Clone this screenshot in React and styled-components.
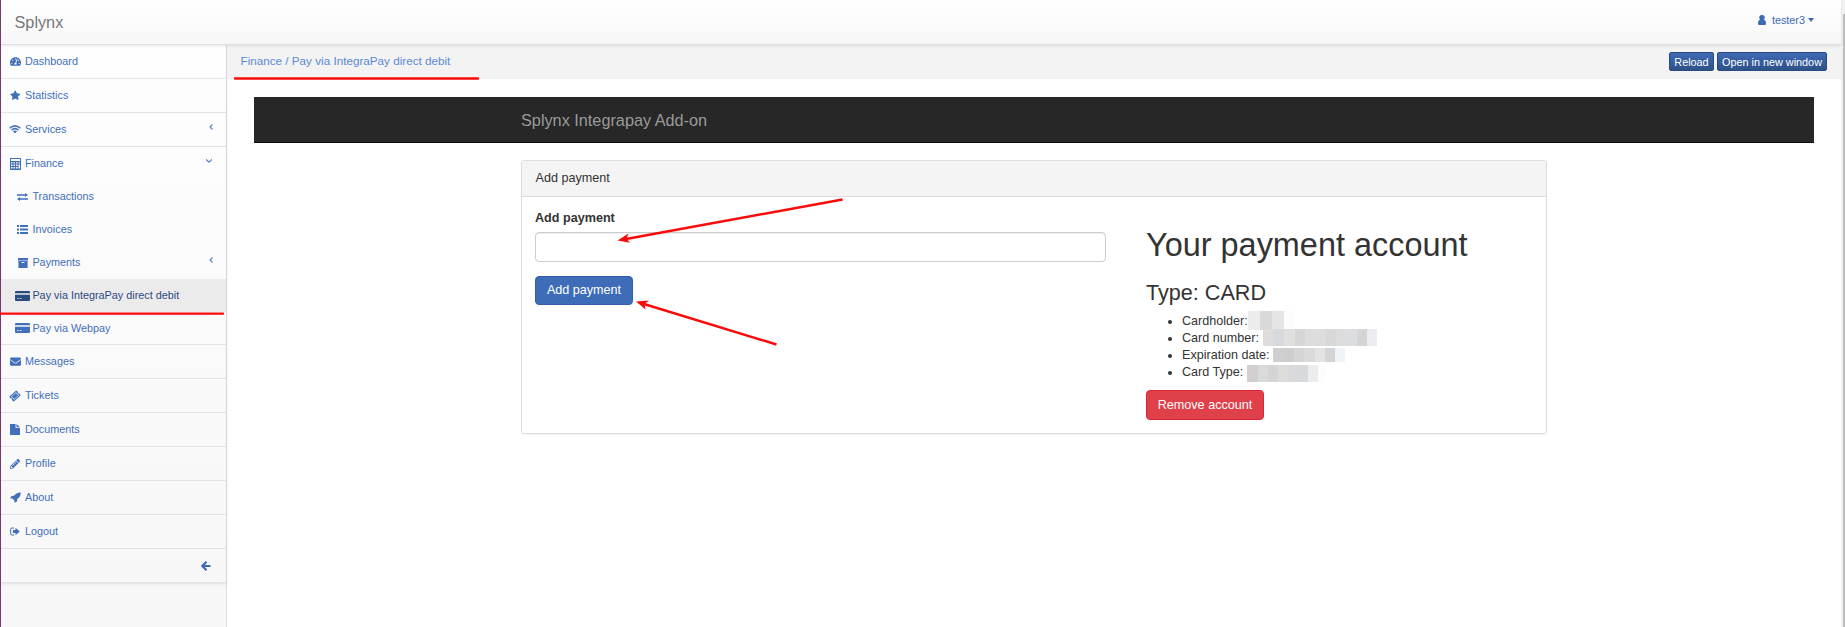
import React from "react";
import styled, { createGlobalStyle, css } from "styled-components";
import { FaTachometerAlt, FaStar, FaEnvelope, FaTicketAlt, FaPencilAlt } from "react-icons/fa";

const GlobalStyle = createGlobalStyle`
  * { box-sizing: border-box; }
  html, body { margin: 0; padding: 0; overflow: hidden; background: #fff; }
  body { font-family: "Liberation Sans", Arial, sans-serif; font-size: 12.6px; line-height: 17px; color: #333; }
`;

const Page = styled.div`
  position: relative;
  display: grid;
  grid-template-columns: 1px 1fr 4px;
  width: 1845px;
  height: 627px;
  overflow: hidden;
`;
const Edge = styled.div`background: #7b3a70;`;
const Frame = styled.div`display: flex; flex-direction: column; min-width: 0;`;
const ScrollTrack = styled.div`background: #f1f1f1; padding: 14px 0 0 2px;`;
const ScrollThumb = styled.div`height: 613px; background: #bcbcbc;`;

const Header = styled.header`
  display: flex;
  justify-content: space-between;
  flex: none;
  height: 45px;
  padding: 0 27px 0 13.5px;
  border-bottom: 1px solid #dfdfdf;
  background: linear-gradient(#fff, #f7f7f7);
  box-shadow: 0 1px 3px rgba(0, 0, 0, 0.09);
  z-index: 1;
`;
const Logo = styled.div`font-size: 16.25px; line-height: 45px; color: #777;`;
const UserMenu = styled.div`
  display: flex;
  align-items: center;
  height: 40px;
  font-size: 10.83px;
  color: #3e6ab5;
  svg { margin-right: 6px; }
`;
const Caret = styled.span`
  margin-left: 3px;
  border: 3.5px solid transparent;
  border-width: 4px 3px 0;
  border-top-color: #3e6ab5;
`;

const Body = styled.div`display: flex; flex: 1; min-height: 0;`;
const Sidebar = styled.nav`
  width: 226px;
  background: #f7f7f7;
  border-right: 1px solid #ddd;
`;
const Menu = styled.div`
  background: linear-gradient(#fefefe, #f7f7f7);
  box-shadow: 0 1px 3px rgba(0, 0, 0, 0.1);
`;
const MenuItem = styled.a`
  display: flex;
  align-items: center;
  height: ${(p) => (p.$open ? 33 : 34)}px;
  padding: 0 13px 0 8px;
  font-size: 10.83px;
  color: #426fba;
  border-bottom: ${(p) => (p.$open ? "0" : "1px solid #e3e3e3")};
  ${(p) => p.$sub && css`
    height: 33px;
    padding-left: 14px;
    border-bottom: ${p.$last ? "1px solid #e3e3e3" : "0"};
  `}
  ${(p) => p.$active && css`background: #ebebeb; color: #2b4a80;`}
`;
const IconSlot = styled.span`
  display: flex;
  justify-content: center;
  width: ${(p) => (p.$sub ? 15 : 12)}px;
  margin-right: ${(p) => (p.$sub ? 2.4 : 4)}px;
`;
const TiltedTicket = styled(FaTicketAlt)`transform: rotate(-42deg);`;
const Label = styled.span`flex: 1; white-space: nowrap;`;
const Chevron = styled.svg`margin: -5px ${(p) => (p.$nudge ? -1 : 0)}px 0 0; flex: none;`;
const CollapseRow = styled.div`
  display: flex;
  align-items: center;
  justify-content: flex-end;
  height: 34px;
  padding-right: 15px;
  border-bottom: 1px solid #e3e3e3;
`;

const Main = styled.main`flex: 1; min-width: 0;`;
const Crumbs = styled.div`
  display: flex;
  align-items: center;
  justify-content: space-between;
  height: 34px;
  padding: 0 14px 2px 13.5px;
  background: #f3f3f3;
  font-size: 11.7px;
  color: #5a8ad4;
`;
const Trail = styled.span`padding-bottom: 2px;`;
const SmallActions = styled.div`display: flex; gap: 3px;`;
const SmallButton = styled.button`
  width: ${(p) => p.$width}px;
  height: 19px;
  padding: 1px 0 0;
  border: 1px solid #284a80;
  border-radius: 2px;
  background: linear-gradient(#3e6ab5, #2f5188);
  color: #fff;
  font: 10.83px/17px "Liberation Sans", Arial, sans-serif;
  white-space: nowrap;
`;

const Content = styled.div`padding: 18px 27px;`;
const Navbar = styled.div`
  height: 46px;
  padding-left: 267px;
  background: #272727;
  border-bottom: 1px solid #0c0c0c;
  color: #9a9a9a;
  font-size: 16.25px;
  line-height: 47px;
`;
const Panel = styled.section`
  width: 1026px;
  height: 274px;
  margin: 17px 0 0 267px;
  border: 1px solid #ddd;
  border-radius: 3px;
  box-shadow: 0 1px 1px rgba(0, 0, 0, 0.05);
`;
const PanelHeading = styled.div`
  height: 36px;
  padding-left: 13.5px;
  line-height: 34px;
  background: #f4f4f4;
  border-bottom: 1px solid #ddd;
`;
const PanelBody = styled.div`display: flex; padding: 0 13px;`;
const FormColumn = styled.form`width: 571px; padding-top: 13px; flex: none;`;
const FieldLabel = styled.label`display: block; height: 22px; font-weight: bold; line-height: 17px;`;
const Input = styled.input`
  display: block;
  width: 100%;
  height: 30px;
  margin-bottom: 14px;
  border: 1px solid #ccc;
  border-radius: 4px;
  box-shadow: inset 0 1px 1px rgba(0, 0, 0, 0.075);
`;
const Button = styled.button`
  display: block;
  width: ${(p) => p.$width}px;
  height: ${(p) => (p.$danger ? 30 : 29)}px;
  margin-top: ${(p) => (p.$danger ? 9 : 0)}px;
  padding: ${(p) => (p.$danger ? "1px 0 0" : "0 0 1px")};
  border: 1px solid ${(p) => (p.$danger ? "#d9243a" : "#375fa3")};
  border-radius: 4px;
  background: ${(p) => (p.$danger ? "#df4049" : "#3f6cb8")};
  color: #fff;
  font: 12.6px/17px "Liberation Sans", Arial, sans-serif;
  white-space: nowrap;
`;
const Account = styled.div`margin-left: 40px;`;
const Title = styled.h1`margin: 30px 0 0; font-size: 32.45px; font-weight: 400; line-height: 36px;`;
const Subtitle = styled.h3`margin: 18px 0 0; font-size: 21.6px; font-weight: 400; line-height: 24px;`;
const Details = styled.ul`margin: 8px 0 0; padding: 0 0 0 36px;`;
const Detail = styled.li`height: 17px; white-space: nowrap;`;
const DetailLine = styled.span`display: inline-flex; height: 17px;`;
const Mosaic = styled.span`
  display: inline-flex;
  height: ${(p) => p.$h}px;
  margin: ${(p) => p.$top}px 0 0 ${(p) => p.$gap}px;
`;
const Tile = styled.span`width: ${(p) => p.$w}px; background: ${(p) => p.$c};`;
const Annotations = styled.svg`position: absolute; inset: 0; pointer-events: none; z-index: 2;`;

const Calculator = () => (
  <svg width="11" height="12" viewBox="0 0 11 12" fill="currentColor">
    <path fillRule="evenodd" d="M0 0h11v12H0zM1 1v2h9V1zM1 4.2v1.3h1.5V4.2zM3.5 4.2v1.3H5V4.2zM6 4.2v1.3h1.5V4.2zM8.5 4.2v1.3H10V4.2zM1 6.6v1.3h1.5V6.6zM3.5 6.6v1.3H5V6.6zM6 6.6v1.3h1.5V6.6zM1 9v1.6h1.5V9zM3.5 9v1.6H5V9zM6 9v1.6h1.5V9zM8.5 6.6v4H10v-4z" />
  </svg>
);
const Card = () => (
  <svg width="15" height="10" viewBox="0 0 15 10" fill="currentColor">
    <path fillRule="evenodd" d="M1 0h13q1 0 1 1v1H0V1q0-1 1-1zM0 4h15v5q0 1-1 1H1q-1 0-1-1zM2 7.200v.8h1.600v-.8zM4.600 7.200v.8h2v-.8z" />
    <path d="M0 2h15v2H0z" opacity="0.25" />
  </svg>
);
const Wifi = () => (
  <svg width="12" height="9" viewBox="0 0 12 9" fill="none" stroke="currentColor" strokeWidth="1.5">
    <path d="M.6 3.300Q6-1.500 11.400 3.300M2.500 5.200Q6 2 9.500 5.200" />
    <path d="M4 6.200Q6 4.700 8 6.200L6 8.500z" fill="currentColor" stroke="none" />
  </svg>
);
const Exchange = () => (
  <svg width="11" height="8" viewBox="0 0 11 8" fill="currentColor">
    <path d="M0 1.300h8V0l3 2-3 2V2.800H0zM11 5.200H3V4L0 6l3 2V6.700h8z" />
  </svg>
);
const List = () => (
  <svg width="11" height="9" viewBox="0 0 11 9" fill="currentColor">
    <path d="M0 0h2v2H0zM3 0h8v2H3zM0 3.500h2v2H0zM3 3.500h8v2H3zM0 7h2v2H0zM3 7h8v2H3z" />
  </svg>
);
const Archive = () => (
  <svg width="10" height="10" viewBox="0 0 10 10" fill="currentColor">
    <path fillRule="evenodd" d="M0 0h10v2.500H0zM.4 3h9.200v7H.4zM3.600 4v1h2.800V4z" />
  </svg>
);
const FileIcon = () => (
  <svg width="10" height="11" viewBox="0 0 10 11" fill="currentColor"><path d="M0 0h5.600v4H10v7H0zM6.500 0 10 3.200H6.500z" /></svg>
);
const Rocket = () => (
  <svg width="11" height="11" viewBox="0 0 11 11" fill="currentColor">
    <path d="M10.700.4C7.500.3 5.500 1.600 4 3.800L1.600 4 0 6.300l2.400.2 2 2 .2 2.300L7 9.400l.2-2.400C9.400 5.500 10.800 3.500 10.700.4z" />
  </svg>
);
const SignOut = () => (
  <svg width="10" height="9" viewBox="0 0 10 9" fill="currentColor">
    <path d="M4 8H2Q.6 8 .6 6.500v-4Q.6 1 2 1h2" fill="none" stroke="currentColor" strokeWidth="1" />
    <path d="M2.900 3h2.600V.8L9.800 4.500 5.500 8.200V6H2.900z" />
  </svg>
);
const User = () => (
  <svg width="8" height="10" viewBox="0 0 8 10" fill="currentColor">
    <path d="M4 0a2.500 2.500 0 0 1 1.700 4.500Q8 5 8 8.500 8 10 6.600 10H1.400Q0 10 0 8.500 0 5 2.300 4.500A2.500 2.500 0 0 1 4 0z" />
  </svg>
);
const ChevronLeft = () => (
  <Chevron $nudge width="6" height="8" viewBox="0 0 6 8" fill="none" stroke="#5a82c4" strokeWidth="1.1"><path d="M4.500 1.500 2 4l2.500 2.500" /></Chevron>
);
const ChevronDown = () => (
  <Chevron width="8" height="6" viewBox="0 0 8 6" fill="none" stroke="#5a82c4" strokeWidth="1.1"><path d="M1.200 1.500 4 4.200l2.800-2.700" /></Chevron>
);
const BackArrow = () => (
  <svg width="10" height="10" viewBox="0 0 10 10" fill="none" stroke="#3e6ab5" strokeWidth="2.2"><path d="M5.500.8 1.400 5l4.100 4.200M1.500 5H9.500" /></svg>
);

const items = [
  { label: "Dashboard", icon: <FaTachometerAlt size={11} /> },
  { label: "Statistics", icon: <FaStar size={10.5} /> },
  { label: "Services", icon: <Wifi />, end: <ChevronLeft /> },
  { label: "Finance", icon: <Calculator />, open: true, end: <ChevronDown /> },
  { label: "Transactions", icon: <Exchange />, sub: true },
  { label: "Invoices", icon: <List />, sub: true },
  { label: "Payments", icon: <Archive />, sub: true, end: <ChevronLeft /> },
  { label: "Pay via IntegraPay direct debit", icon: <Card />, sub: true, active: true },
  { label: "Pay via Webpay", icon: <Card />, sub: true, last: true },
  { label: "Messages", icon: <FaEnvelope size={11} /> },
  { label: "Tickets", icon: <TiltedTicket size={10} /> },
  { label: "Documents", icon: <FileIcon /> },
  { label: "Profile", icon: <FaPencilAlt size={10} /> },
  { label: "About", icon: <Rocket /> },
  { label: "Logout", icon: <SignOut /> },
];

const details = [
  { label: "Cardholder:", gap: 0, top: -2, h: 19, tiles: [[12, "#ececec"], [12, "#d9dad8"], [12, "#e4e6e5"], [11, "#fcfcfc"]] },
  { label: "Card number:", gap: 4, top: -1, h: 17, tiles: [[11, "#dedcdc"], [10, "#d7d9dd"], [11, "#dfdfdd"], [10, "#d6d6d6"], [21, "#dddddd"], [10, "#d8d8d8"], [10, "#dcdcda"], [11, "#dcdde0"], [10, "#d5d5d5"], [10, "#ecedf0"]] },
  { label: "Expiration date:", gap: 3, top: 1, h: 14, tiles: [[11, "#d0cfcf"], [10, "#cecece"], [10, "#d5d5d5"], [11, "#d9dbda"], [10, "#e4e3e2"], [10, "#d4d4d4"], [10, "#eff4f8"]] },
  { label: "Card Type:", gap: 4, top: 1, h: 17, tiles: [[11, "#d3cfcf"], [10, "#d9dbda"], [10, "#d5d5d5"], [10, "#dcdcda"], [10, "#d9dadb"], [10, "#d8d9dc"], [10, "#ebecee"], [8, "#fdfdfd"]] },
];

export default function App() {
  return (
    <Page>
      <GlobalStyle />
      <Edge />
      <Frame>
        <Header>
          <Logo>Splynx</Logo>
          <UserMenu><User />tester3<Caret /></UserMenu>
        </Header>
        <Body>
          <Sidebar>
            <Menu>
              {items.map((i) => (
                <MenuItem key={i.label} $sub={i.sub} $open={i.open} $active={i.active} $last={i.last}>
                  <IconSlot $sub={i.sub}>{i.icon}</IconSlot>
                  <Label>{i.label}</Label>
                  {i.end}
                </MenuItem>
              ))}
              <CollapseRow><BackArrow /></CollapseRow>
            </Menu>
          </Sidebar>
          <Main>
            <Crumbs>
              <Trail>Finance / Pay via IntegraPay direct debit</Trail>
              <SmallActions>
                <SmallButton $width={45}>Reload</SmallButton>
                <SmallButton $width={110}>Open in new window</SmallButton>
              </SmallActions>
            </Crumbs>
            <Content>
              <Navbar>Splynx Integrapay Add-on</Navbar>
              <Panel>
                <PanelHeading>Add payment</PanelHeading>
                <PanelBody>
                  <FormColumn>
                    <FieldLabel>Add payment</FieldLabel>
                    <Input />
                    <Button type="button" $width={98}>Add payment</Button>
                  </FormColumn>
                  <Account>
                    <Title>Your payment account</Title>
                    <Subtitle>Type: CARD</Subtitle>
                    <Details>
                      {details.map((d) => (
                        <Detail key={d.label}>
                          <DetailLine>
                            {d.label}
                            <Mosaic $gap={d.gap} $top={d.top} $h={d.h}>
                              {d.tiles.map(([w, c], n) => <Tile key={n} $w={w} $c={c} />)}
                            </Mosaic>
                          </DetailLine>
                        </Detail>
                      ))}
                    </Details>
                    <Button type="button" $danger $width={118}>Remove account</Button>
                  </Account>
                </PanelBody>
              </Panel>
            </Content>
          </Main>
        </Body>
      </Frame>
      <ScrollTrack><ScrollThumb /></ScrollTrack>
      <Annotations width="1845" height="627" stroke="#fb0a0a" fill="#fb0a0a" strokeWidth="2.4">
        <path d="M235 78.500H478M1 313.600H223" strokeLinecap="round" />
        <path d="M842.500 199.500 626 239M776.500 344.500 644 304" />
        <path stroke="none" d="M617.500 240.500 628.500 233.500 626.500 238.800 630 242.700ZM636 301.500 649 300.500 644.500 304 645.500 309.500Z" />
      </Annotations>
    </Page>
  );
}
